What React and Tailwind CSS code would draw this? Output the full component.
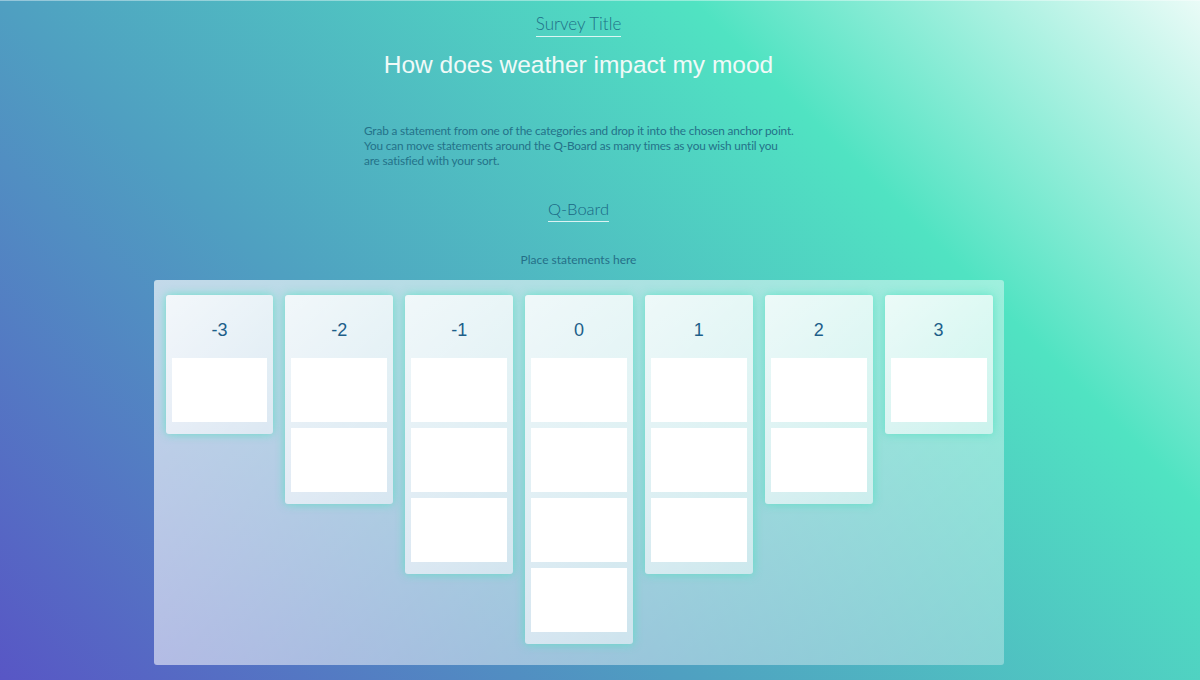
import React from 'react'

const columns = [
  { label: '-3', slots: 1 },
  { label: '-2', slots: 2 },
  { label: '-1', slots: 3 },
  { label: '0', slots: 4 },
  { label: '1', slots: 3 },
  { label: '2', slots: 2 },
  { label: '3', slots: 1 },
]

const Column = ({ label, slots }) => (
  <div className="w-[108px] rounded-[3px] bg-[linear-gradient(135deg,rgba(255,255,255,0.8),rgba(255,255,255,0.5))] shadow-[0_0_10px_rgba(80,227,194,0.8)] px-1.5 pb-3">
    <div className="h-[63px] pt-[7px] flex items-center justify-center text-[18px] text-[#1d5f8a] font-['Liberation_Sans',Arial,sans-serif]">
      {label}
    </div>
    <div className="flex flex-col gap-1.5">
      {Array.from({ length: slots }).map((_, i) => (
        <div key={i} className="h-16 bg-white" />
      ))}
    </div>
  </div>
)

export default function App() {
  return (
    <div className="min-h-[680px] w-full bg-[linear-gradient(45deg,#5856c5_0%,#4f9fc1_36%,#50e3c2_73%,#eafbf7_100%)] font-['Lato','Open_Sans',sans-serif] font-light">
      <div className="h-px bg-white/40" />
      <div className="w-[1157px] flex flex-col items-center">
        {/* titulo */}
        <h2 className="mt-[12px] text-[17px] leading-[22px] text-[#1f7088] border-b border-white/80 pb-px">
          Survey Title
        </h2>
        <h1 className="mt-[12px] text-[24.5px] leading-[32px] text-[#f0faf8] font-normal font-['Liberation_Sans',Arial,sans-serif]">
          How does weather impact my mood
        </h1>

        <p className="self-start ml-[364px] mt-[42px] whitespace-nowrap text-[11.8px] leading-[15px] text-[#247289] font-normal tracking-[-0.15px]">
          Grab a statement from one of the categories and drop it into the chosen anchor point.
          <br />
          You can move statements around the Q-Board as many times as you wish until you
          <br />
          are satisfied with your sort.
        </p>

        <h2 className="mt-[30px] text-[16.5px] leading-[22px] text-[#1a6784] border-b border-white/80 pb-px">
          Q-Board
        </h2>

        <div className="mt-[30px] text-[12px] leading-[16px] text-[#256f88] font-normal">Place statements here</div>

        {/* tablero */}
        <div className="mt-[12px] w-[850px] h-[385px] rounded-[3px] bg-[linear-gradient(135deg,rgba(255,255,255,0.66),rgba(255,255,255,0.32))] pl-3 pr-[11px] pt-[15px]">
          <div className="flex items-start gap-3">
            {columns.map(c => (
              <Column key={c.label} label={c.label} slots={c.slots} />
            ))}
          </div>
        </div>
      </div>
    </div>
  )
}
